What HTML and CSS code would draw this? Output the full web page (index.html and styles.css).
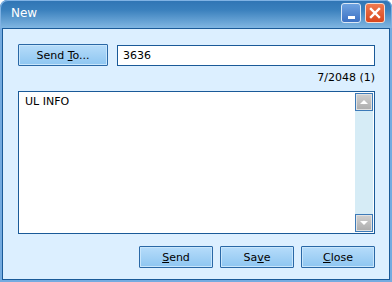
FILE: index.html
```html
<!DOCTYPE html>
<html lang="en">
<head>
  <meta charset="UTF-8">
  <title>New</title>
  <link rel="stylesheet" href="styles.css">
</head>
<body>
  <div class="window">
    <div class="titlebar">
      <span class="title">New</span>
      <div class="caption-buttons">
        <div class="cap-btn minimize"><span class="dash"></span></div>
        <div class="cap-btn close">
          <svg width="12" height="12" viewBox="0 0 12 12">
            <path d="M2 2 L10 10 M10 2 L2 10" stroke="#fff" stroke-width="2.4" stroke-linecap="square"/>
          </svg>
        </div>
      </div>
    </div>

    <div class="client">
      <div class="to-row">
        <button class="btn send-to">Send <u>T</u>o...</button>
        <input type="text" class="to-input" value="3636">
      </div>

      <div class="counter">7/2048 (1)</div>

      <div class="message">
        <div class="message-text">UL INFO</div>
        <div class="scrollbar">
          <div class="scroll-btn"><span class="arrow up"></span></div>
          <div class="scroll-track"></div>
          <div class="scroll-btn"><span class="arrow down"></span></div>
        </div>
      </div>

      <div class="actions">
        <button class="btn action"><u>S</u>end</button>
        <button class="btn action">Sa<u>v</u>e</button>
        <button class="btn action"><u>C</u>lose</button>
      </div>
    </div>
  </div>
</body>
</html>
```

FILE: styles.css
```css
body {
  margin: 0;
  font-family: "DejaVu Sans", Verdana, sans-serif;
  font-size: 11px;
  background-color: #ffffff;
}
.window {
  width: 392px;
  height: 282px;
  box-sizing: border-box;
  display: flex;
  flex-direction: column;
  background-color: #74abe0;
  border-radius: 7px 7px 0 0;
  overflow: hidden;
}
.titlebar {
  height: 28px;
  flex: none;
  display: flex;
  align-items: center;
  justify-content: space-between;
  padding: 0 7px 0 11px;
  background: linear-gradient(#2f74b4 0%, #3a80bd 35%, #80b6e2 100%);
  box-shadow: inset 1px 1px 0 #7fb2e4, inset -1px 0 0 #7fb2e4;
  border-radius: 7px 7px 0 0;
}
.title {
  color: #ffffff;
  font-size: 12px;
  margin-top: -2px;
}
.caption-buttons {
  display: flex;
  gap: 4px;
  margin-top: -2px;
}
.cap-btn {
  width: 18px;
  height: 18px;
  border: 1px solid #ffffff;
  border-radius: 3px;
  display: flex;
  align-items: center;
  justify-content: center;
}
.minimize {
  background: linear-gradient(#6ea2e0, #3d72c4);
  border-color: #dce8f6;
}
.minimize .dash {
  width: 7px;
  height: 3px;
  background-color: #ffffff;
  margin-top: 8px;
}
.close {
  background: linear-gradient(#f07a50, #d8461e);
  border-color: #f6dcd2;
}
.client {
  flex: 1;
  margin: 0 2px 2px 2px;
  border: 1px solid #1a5a98;
  background-color: #dcefff;
  padding: 15px 14px 11px 15px;
  display: flex;
  flex-direction: column;
}
.to-row {
  display: flex;
  align-items: center;
  gap: 9px;
  height: 22px;
}
.btn {
  font-family: "DejaVu Sans", Verdana, sans-serif;
  font-size: 11px;
  color: #000000;
  height: 22px;
  padding: 0;
  border: 1px solid #2a68a6;
  border-radius: 1px;
  background: linear-gradient(#b6dcfa, #8ec6f1);
  box-shadow: inset 0 0 0 1px #c8e6fc;
  cursor: pointer;
}
.send-to {
  width: 90px;
}
.to-input {
  flex: 1;
  height: 21px;
  box-sizing: border-box;
  border: 1px solid #1a5a98;
  background-color: #ffffff;
  padding: 0 5px;
  font-family: "DejaVu Sans", Verdana, sans-serif;
  font-size: 11px;
  color: #000000;
  outline: none;
}
.counter {
  margin-top: 5px;
  height: 14px;
  line-height: 14px;
  text-align: right;
  color: #000000;
}
.message {
  margin-top: 6px;
  height: 143px;
  box-sizing: border-box;
  border: 1px solid #1a5a98;
  background-color: #ffffff;
  display: flex;
  padding: 1px;
}
.message-text {
  flex: 1;
  padding: 2px 5px;
  color: #000000;
}
.scrollbar {
  width: 18px;
  display: flex;
  flex-direction: column;
  background-color: #d6ecf6;
}
.scroll-track {
  flex: 1;
}
.scroll-btn {
  height: 18px;
  box-sizing: border-box;
  border: 1px solid #3c7ab8;
  background: linear-gradient(#d0d0d0, #acacac);
  box-shadow: inset 0 0 0 1px #e2e2e2;
  display: flex;
  align-items: center;
  justify-content: center;
}
.arrow {
  width: 0;
  height: 0;
  border-left: 4px solid transparent;
  border-right: 4px solid transparent;
}
.arrow.up {
  border-bottom: 4px solid #ffffff;
}
.arrow.down {
  border-top: 4px solid #ffffff;
}
.actions {
  margin-top: auto;
  display: flex;
  justify-content: flex-end;
  gap: 7px;
}
.action {
  width: 74px;
}
```
